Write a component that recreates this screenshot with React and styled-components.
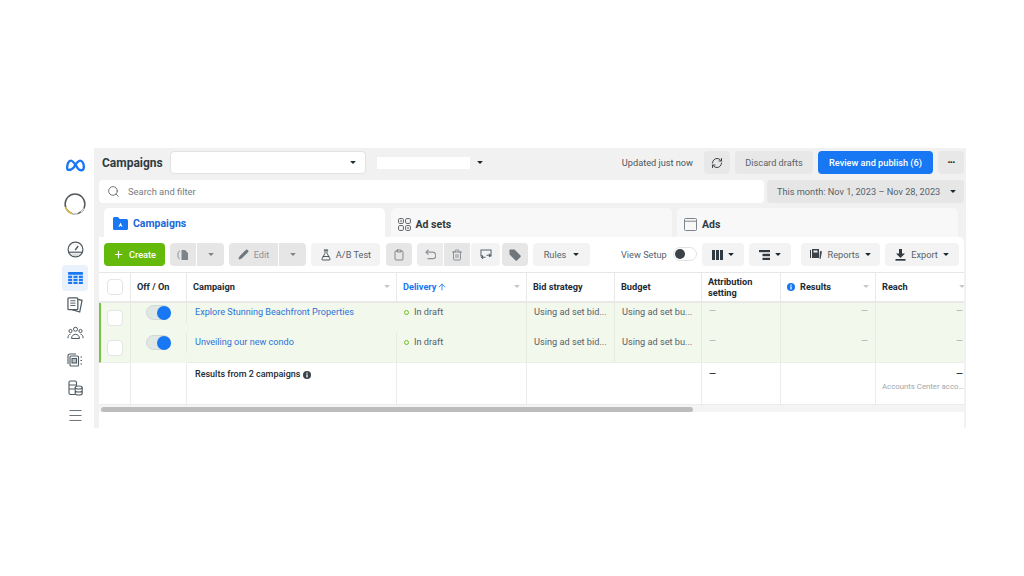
import React from "react";
import styled, { createGlobalStyle } from "styled-components";
import {
  ArrowUp,
  Clipboard,
  FlaskConical,
  Menu,
  Pencil,
  Plus,
  RefreshCw,
  Search,
  Trash2,
} from "lucide-react";

const GlobalStyle = createGlobalStyle`
  html, body { margin: 0; padding: 0; background: #fff; }
  * { box-sizing: border-box; }
  body { font-family: Roboto, "Liberation Sans", sans-serif; color: #1c2b33; }
`;

const Page = styled.div`
  width: 1024px;
  height: 576px;
  padding: 148px 0 0 58px;
  display: flex;
  overflow: hidden;
`;

const Sidebar = styled.nav`
  width: 36px;
  height: 280px;
  padding-right: 2px;
  display: flex;
  flex-direction: column;
  align-items: center;
  color: #4f5a62;
`;

const NavItem = styled.div`
  width: 26px;
  height: 26px;
  margin-top: ${(p) => p.$top || 0}px;
  display: flex;
  align-items: center;
  justify-content: center;
  border-radius: 4px;
  background: ${(p) => (p.$active ? "#e9f1fd" : "transparent")};
  color: ${(p) => (p.$active ? "#1877f2" : "inherit")};
`;

const Main = styled.main`
  width: 872px;
  height: 280px;
  background: #f1f1f1;
  display: flex;
  flex-direction: column;
`;

const HeaderBar = styled.header`
  height: 32px;
  padding: 3px 2px 0 8px;
  display: flex;
  align-items: flex-start;
  font-size: 9.2px;
  color: #4b5760;
`;

const Title = styled.h1`
  margin: 0;
  width: 68px;
  line-height: 25px;
  font-size: 12px;
  font-weight: 700;
  color: #2f3a42;
`;

const SelectBox = styled.div`
  width: 196px;
  height: 23px;
  padding-right: 9px;
  background: #fff;
  border: 1px solid #e2e2e2;
  border-radius: 4px;
  display: flex;
  align-items: center;
  justify-content: flex-end;
`;

const Redacted = styled.div`
  width: 93px;
  height: 12px;
  margin: 6px 7px 0 11px;
  background: #fff;
`;

const AccountCaret = styled.div`
  height: 23px;
  display: flex;
  align-items: center;
`;

const Updated = styled.span`
  margin-left: auto;
  margin-right: 11px;
  line-height: 23px;
`;

const Caret = styled.span`
  display: inline-block;
  flex: none;
  width: 0;
  height: 0;
  border-left: ${(p) => p.$size || 4}px solid transparent;
  border-right: ${(p) => p.$size || 4}px solid transparent;
  border-top: ${(p) => p.$size || 4}px solid ${(p) => p.$color || "#1c2b33"};
  border-radius: 1px;
`;

const GrayButton = styled.div`
  width: ${(p) => p.$w}px;
  height: 23px;
  margin-left: ${(p) => p.$gap ?? 5}px;
  flex: none;
  display: flex;
  align-items: center;
  justify-content: center;
  gap: 5px;
  border-radius: 4px;
  background: ${(p) => p.$bg || "#e8e8e8"};
  color: ${(p) => p.$color || "#56626a"};
  font-size: 9.2px;
  font-weight: ${(p) => p.$weight || 400};
  white-space: nowrap;
`;

const PublishButton = styled(GrayButton)`
  background: #1877f2;
  color: #fff;
  font-weight: 500;
`;

const MoreDots = styled.span`
  font-size: 8px;
  letter-spacing: -0.5px;
`;

const SearchRow = styled.div`
  height: 23px;
  margin-left: 5px;
  display: flex;
`;

const SearchBox = styled.div`
  width: 665px;
  height: 23px;
  padding-left: 8px;
  background: #fff;
  border-radius: 4px;
  display: flex;
  align-items: center;
  gap: 8px;
  font-size: 9.4px;
  color: #737c83;
`;

const DateButton = styled.div`
  width: 197px;
  height: 23px;
  margin-left: 3px;
  padding: 0 8px 0 10px;
  background: #e6e6e6;
  border-radius: 4px;
  display: flex;
  align-items: center;
  justify-content: space-between;
  font-size: 9.2px;
  color: #56626a;
`;

const Tabs = styled.div`
  height: 29px;
  margin-top: 5px;
  padding-left: 10px;
  display: flex;
  gap: 5.5px;
`;

const Tab = styled.div`
  width: 281px;
  padding-left: ${(p) => (p.$active ? 9 : 7)}px;
  padding-top: ${(p) => (p.$active ? 1 : 3)}px;
  border-radius: 5px 5px 0 0;
  background: ${(p) => (p.$active ? "#fff" : "#f8f8f8")};
  display: flex;
  align-items: center;
  gap: 5px;
  font-size: 10.5px;
  font-weight: 700;
  color: ${(p) => (p.$active ? "#1b68d8" : "#2f3a42")};
`;

const Card = styled.section`
  flex: 1;
  margin: 0 2px 0 5px;
  background: #fff;
  border-radius: 0 5px 0 0;
  min-height: 0;
  overflow: hidden;
`;

const Toolbar = styled.div`
  height: 35px;
  padding: 6px 0 0 5px;
  display: flex;
  align-items: flex-start;
`;

const ToolButton = styled.div`
  width: ${(p) => p.$w}px;
  height: 23px;
  margin-left: ${(p) => p.$gap ?? 0}px;
  flex: none;
  display: flex;
  align-items: center;
  justify-content: center;
  gap: ${(p) => p.$space ?? 5}px;
  border-radius: ${(p) => p.$radius || "4px"};
  background: ${(p) => p.$bg || "#f3f3f3"};
  color: ${(p) => p.$color || "#56626a"};
  font-size: 9.2px;
  white-space: nowrap;
`;

const CreateButton = styled(ToolButton)`
  background: #64b90a;
  color: #fff;
  font-weight: 500;
`;

const ViewLabel = styled.span`
  width: 46px;
  margin-left: 31px;
  line-height: 23px;
  font-size: 9.2px;
  color: #56626a;
  white-space: nowrap;
`;

const ViewToggle = styled.div`
  width: 24px;
  height: 14px;
  margin: 4px 0 0 6px;
  padding: 1px;
  border: 1px solid #e2e2e2;
  border-radius: 7px;
  background: #fff;
`;

const ViewKnob = styled.div`
  width: 10px;
  height: 10px;
  border-radius: 50%;
  background: #3b4248;
`;

const Table = styled.div`
  display: grid;
  grid-template-columns: 32px 56px 210px 130px 88px 87px 79px 95px 94px;
  width: 871px;
`;

const HeadCell = styled.div`
  height: 31px;
  padding: 0 ${(p) => (p.$plain ? 5 : 6)}px 1px 6px;
  border-top: 1px solid #e6e6e6;
  border-bottom: 2px solid #e9e9e9;
  border-right: ${(p) => (p.$plain ? "none" : "1px solid #e9e9e9")};
  display: flex;
  align-items: center;
  justify-content: ${(p) => (p.$center ? "center" : "space-between")};
  gap: 4px;
  font-size: 9.2px;
  font-weight: 700;
  line-height: 11px;
  color: ${(p) => (p.$sorted ? "#1877f2" : "#1c2b33")};
`;

const HeadLabel = styled.span`
  display: flex;
  align-items: center;
  gap: ${(p) => p.$space ?? 1}px;
`;

const Cell = styled.div`
  height: 30px;
  padding: 3px 7px 0 7px;
  background: #f2f8ec;
  border-right: ${(p) => (p.$plain ? "none" : "1px solid #e6ebe2")};
  border-bottom: ${(p) => (p.$last ? "1px solid #ecefe9" : "none")};
  display: flex;
  align-items: flex-start;
  justify-content: ${(p) => (p.$right ? "flex-end" : "flex-start")};
  gap: 5px;
  font-size: 9.2px;
  line-height: 12px;
  color: #56626a;
  white-space: nowrap;
  overflow: hidden;
`;

const CampaignCell = styled(Cell)`
  padding-left: 8px;
`;

const CheckCell = styled(Cell)`
  padding: 7px 0 0 6px;
  border-left: 2px solid #7ac143;
`;

const ToggleCell = styled.div`
  height: 30px;
  background: #f2f8ec;
  position: relative;
  padding: 2px 0 0 15px;
  &::after {
    content: "";
    position: absolute;
    top: 0;
    right: 0;
    width: 1px;
    height: 20px;
    background: #e6ebe2;
  }
`;

const Check = styled.div`
  width: 16px;
  height: 16px;
  background: #fff;
  border: 1px solid #e4e6e4;
  border-radius: 4px;
`;

const Switch = styled.div`
  width: 25px;
  height: 15px;
  padding: 1px;
  display: flex;
  justify-content: flex-end;
  border-radius: 8px;
  background: #dfe8e4;
  border: 1px solid #cfd9d6;
`;

const SwitchKnob = styled.div`
  width: 12px;
  height: 12px;
  margin: 0 -1px;
  border-radius: 50%;
  background: #1877f2;
  box-shadow: 0 0 0 1px #1877f2;
`;

const CampaignLink = styled.a`
  color: #2a73d8;
  font-size: 9.1px;
`;

const DraftDot = styled.span`
  width: 5px;
  height: 5px;
  margin-top: 4px;
  flex: none;
  border: 1.5px solid #6fbf1f;
  border-radius: 50%;
`;

const Dash = styled.span`
  color: #a3aaae;
  line-height: 11px;
  font-size: 9px;
`;

const SummaryCell = styled.div`
  height: 42px;
  padding: 6px 7px 0 7px;
  border-right: ${(p) => (p.$plain ? "none" : "1px solid #ececec")};
  border-bottom: 1px solid #ececec;
  display: flex;
  flex-direction: column;
  align-items: ${(p) => (p.$right ? "flex-end" : "flex-start")};
  font-size: 9px;
  font-weight: 500;
  color: #1c2b33;
  white-space: nowrap;
  overflow: hidden;
`;

const SummaryTitle = styled.span`
  margin-left: 1px;
  display: flex;
  align-items: center;
  gap: 3px;
  line-height: 11px;
`;

const AccountsNote = styled.span`
  width: 82px;
  align-self: flex-start;
  margin: 3px 0 0 -1px;
  overflow: hidden;
  text-overflow: ellipsis;
  font-size: 7.8px;
  font-weight: 400;
  color: #a0a6aa;
`;

const ScrollTrack = styled.div`
  height: 7px;
  padding: 2px 2px 0;
  background: #f4f4f4;
`;

const ScrollThumb = styled.div`
  width: 592px;
  height: 5px;
  border-radius: 3px;
  background: #bcbcbc;
`;

const MetaLogo = () => (
  <svg width="19" height="13" viewBox="0 0 20 14" fill="none" stroke="#1877f2" strokeWidth="2.500">
    <path d="M2.500 11.800C1.400 11.800 1 10.600 1 9c0-3.600 1.600-7.300 4-7.300 2.700 0 4.700 4 7.300 8.200 1.100 1.600 2.400 2.200 3.700 2.200 1.900 0 3-1.400 3-3.600C19 5 17.300 1.700 15 1.700c-2.500 0-4.600 3.500-6.900 7.300-1.700 2.600-3.700 2.800-5.600 2.800z" />
  </svg>
);

const AccountRing = () => (
  <svg width="22" height="22" viewBox="0 0 22 22" fill="none" strokeWidth="1.500">
    <circle cx="11" cy="11" r="9.900" stroke="#55595c" />
    <path d="M1.600 14a9.900 9.900 0 0 0 7 6.600" stroke="#e2bd45" />
    <path d="M8.600 20.600a9.900 9.900 0 0 0 5 .1" stroke="#e4e4e4" />
    <path d="M19.800 15.500a9.900 9.900 0 0 1-3 3.500" stroke="#d8d8d8" />
  </svg>
);

const GaugeIcon = () => (
  <svg width="17" height="17" viewBox="0 0 17 17" fill="none" stroke="currentColor" strokeWidth="1.200">
    <circle cx="8.500" cy="8.500" r="7.400" />
    <path d="M1.300 11.200h14.400" />
    <path d="M8.200 9l3-4" strokeWidth="1.400" />
    <path d="M3.700 8v.1M5.500 5v.1M8.500 3.800v.1M13.200 8v.1" strokeWidth="1.500" />
    <path d="M3 12.500a7 7 0 0 0 11 0z" fill="#dcdcdc" stroke="none" />
  </svg>
);

const TableIcon = () => (
  <svg width="15" height="12" viewBox="0 0 16 13" fill="currentColor">
    <rect x="0" y="0" width="16" height="3" />
    <rect x="0" y="4" width="4.400" height="2.400" />
    <rect x="5.800" y="4" width="4.400" height="2.400" />
    <rect x="11.600" y="4" width="4.400" height="2.400" />
    <rect x="0" y="7.300" width="4.400" height="2.400" />
    <rect x="5.800" y="7.300" width="4.400" height="2.400" />
    <rect x="11.600" y="7.300" width="4.400" height="2.400" />
    <rect x="0" y="10.600" width="4.400" height="2.400" />
    <rect x="5.800" y="10.600" width="4.400" height="2.400" />
    <rect x="11.600" y="10.600" width="4.400" height="2.400" />
  </svg>
);

const PagesIcon = () => (
  <svg width="16" height="16" viewBox="0 0 17 17" fill="none" stroke="currentColor" strokeWidth="1.300">
    <rect x="1" y="1" width="10.500" height="12.500" rx="1" />
    <path d="M11.500 2.500l4.500 1-2.500 12.500-8-2.500" />
    <path d="M3.500 4h5.500M3.500 6.500h5.500M3.500 9h5.500" strokeWidth="1" />
  </svg>
);

const PeopleIcon = () => (
  <svg width="17" height="14" viewBox="0 0 17 14" fill="none" stroke="currentColor" strokeWidth="1">
    <circle cx="8.500" cy="3.200" r="2" />
    <circle cx="3.500" cy="5" r="1.600" />
    <circle cx="13.500" cy="5" r="1.600" />
    <path d="M4.500 12.500c0-2.500 1.800-4.200 4-4.200s4 1.700 4 4.200zM1 12.200c-.3-2 .8-4 2.500-4M16 12.200c.3-2-.8-4-2.500-4" />
  </svg>
);

const AdsIcon = () => (
  <svg width="17" height="15" viewBox="0 0 17 15" fill="none" stroke="currentColor" strokeWidth="1.100">
    <rect x="3" y="3" width="8.500" height="10" rx="1" />
    <path d="M1 11V3a2 2 0 0 1 2-2h6" />
    <rect x="5" y="5.500" width="4.500" height="4.500" fill="#bfc3c6" />
    <path d="M13.500 4h2.500M13.500 7.500h2.500M13.500 11h2.500" strokeDasharray="1.500 1" />
  </svg>
);

const BillingIcon = () => (
  <svg width="15" height="16" viewBox="0 0 15 16" fill="none" stroke="currentColor" strokeWidth="1.100">
    <path d="M7 14.500H2.500a1.500 1.500 0 0 1-1.500-1.500V2.500A1.500 1.500 0 0 1 2.500 1H7a1.500 1.500 0 0 1 1.500 1.500V6" />
    <path d="M1 5h7.500M1 9h6" />
    <ellipse cx="10.700" cy="7.500" rx="3.500" ry="1.500" />
    <path d="M7.200 7.500v6c0 .8 1.600 1.500 3.500 1.500s3.500-.7 3.500-1.500v-6M7.200 10.500c0 .8 1.600 1.500 3.500 1.500s3.500-.7 3.500-1.500" />
  </svg>
);

const FolderIcon = () => (
  <svg width="15" height="13" viewBox="0 0 15 13">
    <path d="M0 1.500A1.500 1.500 0 0 1 1.500 0h3.300l2 2H13.500A1.500 1.500 0 0 1 15 3.500v8a1.500 1.500 0 0 1-1.500 1.500h-12A1.500 1.500 0 0 1 0 11.500z" fill="#1877f2" />
    <path d="M7.500 5.500l-2 4.300h1.100l.3-.8h1.200l.3.800h1.100z" fill="#fff" />
  </svg>
);

const AdSetsIcon = () => (
  <svg width="13" height="13" viewBox="0 0 13 13" fill="none" stroke="#565f66" strokeWidth="1">
    <rect x="0.600" y="0.600" width="4.800" height="4.800" rx="1" />
    <rect x="7.600" y="0.600" width="4.800" height="4.800" rx="1" />
    <rect x="0.600" y="7.600" width="4.800" height="4.800" rx="1" />
    <rect x="7.600" y="7.600" width="4.800" height="4.800" rx="1" />
    <rect x="2.300" y="2.300" width="1.400" height="1.400" fill="#565f66" stroke="none" />
    <rect x="9.300" y="9.300" width="1.400" height="1.400" fill="#565f66" stroke="none" />
  </svg>
);

const AdsTabIcon = () => (
  <svg width="13" height="13" viewBox="0 0 13 13" fill="none" stroke="#7d858b" strokeWidth="1">
    <rect x="0.500" y="0.500" width="12" height="12" rx="1" />
    <path d="M0.500 3.200h12" />
  </svg>
);

const CopyIcon = () => (
  <svg width="12" height="12" viewBox="0 0 12 12" fill="#7d858b">
    <path d="M4.500 1h3.500l3 3v7H4.500z" />
    <path d="M3 2.200H2.400L1 3.500v5l1.400 1.300H3" fill="none" stroke="#8a9197" />
  </svg>
);

const UndoIcon = () => (
  <svg width="11" height="11" viewBox="0 0 11 11" fill="none" stroke="#8a9197" strokeWidth="1.200">
    <path d="M3.500 .8L1 3.200l2.500 2.400" />
    <path d="M1.200 3.200h6.300a2.800 2.800 0 0 1 0 6.500H2.500" />
  </svg>
);

const ReviewIcon = () => (
  <svg width="12" height="11" viewBox="0 0 13 12" fill="none" stroke="#56626a" strokeWidth="1.100">
    <path d="M3 7.500H1V1h11v6.500h-2" />
    <path d="M3.300 10.800l-1.700-1.700 1.700-1.700M1.800 9.100H6M9.700 5.200l1.700 1.700-1.700 1.700M11.200 6.900H7" />
  </svg>
);

const TagIcon = () => (
  <svg width="12" height="12" viewBox="0 0 12 12" fill="#6f777d">
    <path d="M0.500 1.200a.7.7 0 0 1 .7-.7h4.300l6 6a1 1 0 0 1 0 1.400l-3.600 3.600a1 1 0 0 1-1.400 0l-6-6z" />
  </svg>
);

const ColumnsIcon = () => (
  <svg width="11" height="10" viewBox="0 0 11 10" fill="#2f3a42">
    <rect x="0" y="0" width="3" height="10" />
    <rect x="4" y="0" width="3" height="10" />
    <rect x="8" y="0" width="3" height="10" />
  </svg>
);

const BreakdownIcon = () => (
  <svg width="11" height="10" viewBox="0 0 11 10" fill="#2f3a42">
    <rect x="0" y="0" width="11" height="2.200" />
    <rect x="3.500" y="3.800" width="7.500" height="2.400" />
    <rect x="3.500" y="7.800" width="7.500" height="2.200" />
  </svg>
);

const ReportsIcon = () => (
  <svg width="12" height="11" viewBox="0 0 12 11" fill="#3b4248">
    <path d="M2 0h7v9H2zM0 1h1v8H0zM10 2l2 .5-1.500 7.500-1-.3z" />
    <rect x="3.500" y="1.500" width="4" height="2" fill="#f3f3f3" />
  </svg>
);

const ExportIcon = () => (
  <svg width="11" height="12" viewBox="0 0 11 12" fill="#2f3a42">
    <path d="M4 0h3v4.500h3L5.500 9 1 4.500h3z" />
    <rect x="0.500" y="10" width="10" height="1.700" />
  </svg>
);

const InfoDot = ({ size = 9, color = "#1c2b33" }) => (
  <svg width={size} height={size} viewBox="0 0 10 10">
    <circle cx="5" cy="5" r="5" fill={color} />
    <rect x="4.200" y="4.300" width="1.600" height="3.700" fill="#fff" />
    <rect x="4.200" y="2" width="1.600" height="1.500" fill="#fff" />
  </svg>
);

const campaigns = ["Explore Stunning Beachfront Properties", "Unveiling our new condo"];

const App = () => (
  <>
    <GlobalStyle />
    <Page>
      <Sidebar>
        <NavItem $top={4}><MetaLogo /></NavItem>
        <NavItem $top={13}><AccountRing /></NavItem>
        <NavItem $top={19}><GaugeIcon /></NavItem>
        <NavItem $top={3} $active><TableIcon /></NavItem>
        <NavItem $top={1}><PagesIcon /></NavItem>
        <NavItem $top={2}><PeopleIcon /></NavItem>
        <NavItem $top={1}><AdsIcon /></NavItem>
        <NavItem $top={2}><BillingIcon /></NavItem>
        <NavItem $top={1}><Menu size={17} strokeWidth={1.200} /></NavItem>
      </Sidebar>
      <Main>
        <HeaderBar>
          <Title>Campaigns</Title>
          <SelectBox><Caret $size={3.500} /></SelectBox>
          <Redacted />
          <AccountCaret><Caret $size={3.500} /></AccountCaret>
          <Updated>Updated just now</Updated>
          <GrayButton $w={26} $gap={0}><RefreshCw size={12} strokeWidth={2} color="#3b4248" /></GrayButton>
          <GrayButton $w={78}>Discard drafts</GrayButton>
          <PublishButton $w={115}>Review and publish (6)</PublishButton>
          <GrayButton $w={26} $color="#1c2b33" $weight={700}><MoreDots>•••</MoreDots></GrayButton>
        </HeaderBar>
        <SearchRow>
          <SearchBox>
            <Search size={13} color="#56626a" strokeWidth={1.600} />
            Search and filter
          </SearchBox>
          <DateButton>
            This month: Nov 1, 2023 – Nov 28, 2023
            <Caret $size={3.500} />
          </DateButton>
        </SearchRow>
        <Tabs>
          <Tab $active><FolderIcon />Campaigns</Tab>
          <Tab><AdSetsIcon />Ad sets</Tab>
          <Tab><AdsTabIcon />Ads</Tab>
        </Tabs>
        <Card>
          <Toolbar>
            <CreateButton $w={61}><Plus size={11} strokeWidth={2.500} />Create</CreateButton>
            <ToolButton $w={26} $gap={5} $bg="#e6e6e6" $radius="4px 0 0 4px"><CopyIcon /></ToolButton>
            <ToolButton $w={27} $gap={1} $bg="#e6e6e6" $radius="0 4px 4px 0"><Caret $size={3} $color="#7d858b" /></ToolButton>
            <ToolButton $w={49} $gap={5} $bg="#e6e6e6" $radius="4px 0 0 4px" $color="#8a9197">
              <Pencil size={11} fill="#6f777d" color="#6f777d" strokeWidth={1.500} />Edit
            </ToolButton>
            <ToolButton $w={27} $gap={1} $bg="#e6e6e6" $radius="0 4px 4px 0"><Caret $size={3} $color="#7d858b" /></ToolButton>
            <ToolButton $w={69} $gap={5} $space={4}>
              <FlaskConical size={12} color="#1c2b33" strokeWidth={1.500} />A/B Test
            </ToolButton>
            <ToolButton $w={26} $gap={6} $bg="#e6e6e6"><Clipboard size={12} strokeWidth={1.400} /></ToolButton>
            <ToolButton $w={26} $gap={5} $bg="#ececec" $radius="4px 0 0 4px"><UndoIcon /></ToolButton>
            <ToolButton $w={26} $gap={1} $bg="#e6e6e6" $radius="0" $color="#6f777d"><Trash2 size={12} strokeWidth={1.500} /></ToolButton>
            <ToolButton $w={29} $gap={1}><ReviewIcon /></ToolButton>
            <ToolButton $w={26} $gap={2} $bg="#e6e6e6"><TagIcon /></ToolButton>
            <ToolButton $w={57} $gap={5} $space={7}>Rules<Caret $size={3.500} /></ToolButton>
            <ViewLabel>View Setup</ViewLabel>
            <ViewToggle><ViewKnob /></ViewToggle>
            <ToolButton $w={42} $gap={5}><ColumnsIcon /><Caret $size={3.500} /></ToolButton>
            <ToolButton $w={42} $gap={5}><BreakdownIcon /><Caret $size={3.500} /></ToolButton>
            <ToolButton $w={79} $gap={10}><ReportsIcon />Reports<Caret $size={3.500} /></ToolButton>
            <ToolButton $w={74} $gap={5}><ExportIcon />Export<Caret $size={3.500} /></ToolButton>
          </Toolbar>
          <Table>
            <HeadCell $center><Check /></HeadCell>
            <HeadCell>Off / On</HeadCell>
            <HeadCell>Campaign<Caret $size={3} $color="#c4c8cb" /></HeadCell>
            <HeadCell $sorted>
              <HeadLabel>Delivery<ArrowUp size={10} strokeWidth={2} /></HeadLabel>
              <Caret $size={3} $color="#c4c8cb" />
            </HeadCell>
            <HeadCell>Bid strategy</HeadCell>
            <HeadCell>Budget</HeadCell>
            <HeadCell><span>Attribution<br />setting</span></HeadCell>
            <HeadCell>
              <HeadLabel $space={5}><InfoDot size={8} color="#1877f2" />Results</HeadLabel>
              <Caret $size={3} $color="#c4c8cb" />
            </HeadCell>
            <HeadCell $plain>Reach<Caret $size={3} $color="#c4c8cb" /></HeadCell>

            {campaigns.map((name, i) => {
              const last = i === campaigns.length - 1;
              return (
                <React.Fragment key={name}>
                  <CheckCell $last={last}><Check /></CheckCell>
                  <ToggleCell><Switch><SwitchKnob /></Switch></ToggleCell>
                  <CampaignCell $last={last} $plain={!last}><CampaignLink>{name}</CampaignLink></CampaignCell>
                  <Cell $last={last}><DraftDot />In draft</Cell>
                  <Cell $last={last}>Using ad set bid...</Cell>
                  <Cell $last={last}>Using ad set bu...</Cell>
                  <Cell $last={last}><Dash>—</Dash></Cell>
                  <Cell $last={last} $right><Dash>—</Dash></Cell>
                  <Cell $last={last} $right $plain><Dash>—</Dash></Cell>
                </React.Fragment>
              );
            })}

            <SummaryCell />
            <SummaryCell />
            <SummaryCell>
              <SummaryTitle>Results from 2 campaigns <InfoDot size={8} color="#3b4248" /></SummaryTitle>
            </SummaryCell>
            <SummaryCell />
            <SummaryCell $plain />
            <SummaryCell />
            <SummaryCell>—</SummaryCell>
            <SummaryCell />
            <SummaryCell $right $plain>
              —
              <AccountsNote>Accounts Center accounts</AccountsNote>
            </SummaryCell>
          </Table>
          <ScrollTrack><ScrollThumb /></ScrollTrack>
        </Card>
      </Main>
    </Page>
  </>
);

export default App;
